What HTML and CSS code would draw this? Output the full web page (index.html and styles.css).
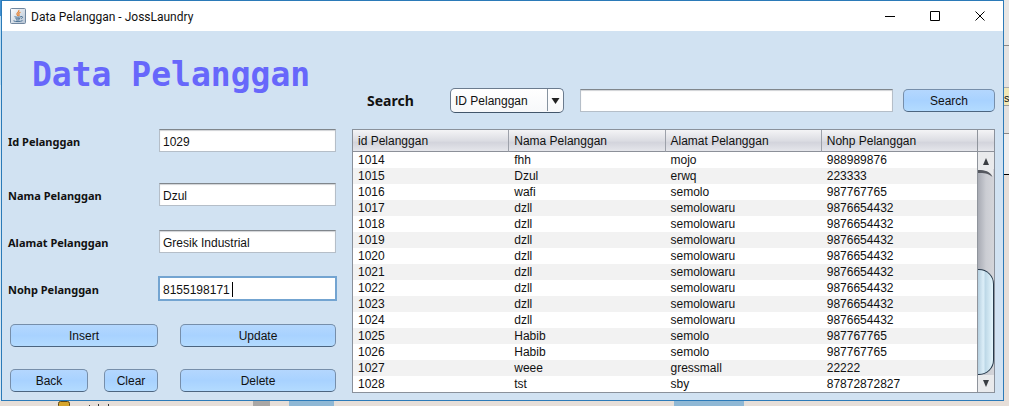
FILE: index.html
```html
<!DOCTYPE html>
<html lang="id">
<head>
<meta charset="utf-8">
<title>Data Pelanggan - JossLaundry</title>
<link rel="stylesheet" href="styles.css">
</head>
<body>
<div class="desktop">
  <div class="behind-left"></div>
  <div class="window">
    <header class="titlebar">
      <svg class="app-icon" width="16" height="16" viewBox="0 0 16 16" aria-hidden="true">
        <defs><linearGradient id="tile" x1="0" y1="0" x2="1" y2="1"><stop offset="0" stop-color="#fff"/><stop offset="1" stop-color="#b5c3d3"/></linearGradient></defs>
        <rect x=".5" y=".5" width="15" height="15" rx="1" fill="url(#tile)" stroke="#71879f"/>
        <path d="M8.800 2C10 4 6 4.600 7 6.500c.3.700 1 .9.800 1.700M10.500 4.300C8.400 5 8.400 5.800 9 6.500c.4.600.1 1.200-.5 1.500" fill="none" stroke="#e58132" stroke-width="1.200"/>
        <path d="M4.500 8.700c1.500.7 5 .6 6.500 0M5.500 10.400c1.300.5 3.400.5 4.700 0M6 11.800c1 .4 2.500.4 3.600 0M11 8.600c2.200-.5 2 1.400.2 2M3.500 12.800c2.200 1.200 7 1 9-.2" fill="none" stroke="#4c7396"/>
      </svg>
      <span class="window-title">Data Pelanggan - JossLaundry</span>
      <div class="window-controls">
        <button type="button" aria-label="Minimize"><svg width="11" height="11"><path d="M0 5.500h10" stroke="#000"/></svg></button>
        <button type="button" aria-label="Maximize"><svg width="11" height="11"><path d="M.5.500h9v9h-9z" fill="none" stroke="#000"/></svg></button>
        <button type="button" aria-label="Close"><svg width="11" height="11"><path d="M.5.500l9 9M9.500.500l-9 9" stroke="#000"/></svg></button>
      </div>
    </header>
    <main class="content">
      <section class="editor">
        <h1>Data Pelanggan</h1>
        <form class="form">
          <div class="field first"><label for="id">Id Pelanggan</label><input id="id" type="text" value="1029"></div>
          <div class="field"><label for="nama">Nama Pelanggan</label><input id="nama" type="text" value="Dzul"></div>
          <div class="field"><label for="alamat">Alamat Pelanggan</label><input id="alamat" type="text" value="Gresik Industrial"></div>
          <div class="field"><label for="nohp">Nohp Pelanggan</label><div class="active-box"><input id="nohp" type="text" value="8155198171"><i class="caret"></i></div></div>
          <div class="actions">
            <button class="btn wide" type="button">Insert</button>
            <button class="btn" type="button">Update</button>
            <button class="btn" type="button">Back</button>
            <button class="btn" type="button">Clear</button>
            <button class="btn" type="button">Delete</button>
          </div>
        </form>
      </section>
      <section class="browser">
        <form class="search">
          <label for="by">Search</label>
          <div class="combo"><select id="by"><option>ID Pelanggan</option></select><svg class="combo-arrow" width="16" height="22" aria-hidden="true"><path d="M.5 0v22" stroke="#8793a0"/><path d="M4.500 9h8l-4 6z" fill="#222"/></svg></div>
          <input type="text" aria-label="Search text">
          <button class="btn" type="button">Search</button>
        </form>
        <div class="grid">
          <table>
            <thead><tr><th>id Pelanggan</th><th>Nama Pelanggan</th><th>Alamat Pelanggan</th><th>Nohp Pelanggan</th></tr></thead>
            <tbody>
              <tr><td>1014</td><td>fhh</td><td>mojo</td><td>988989876</td></tr>
              <tr><td>1015</td><td>Dzul</td><td>erwq</td><td>223333</td></tr>
              <tr><td>1016</td><td>wafi</td><td>semolo</td><td>987767765</td></tr>
              <tr><td>1017</td><td>dzll</td><td>semolowaru</td><td>9876654432</td></tr>
              <tr><td>1018</td><td>dzll</td><td>semolowaru</td><td>9876654432</td></tr>
              <tr><td>1019</td><td>dzll</td><td>semolowaru</td><td>9876654432</td></tr>
              <tr><td>1020</td><td>dzll</td><td>semolowaru</td><td>9876654432</td></tr>
              <tr><td>1021</td><td>dzll</td><td>semolowaru</td><td>9876654432</td></tr>
              <tr><td>1022</td><td>dzll</td><td>semolowaru</td><td>9876654432</td></tr>
              <tr><td>1023</td><td>dzll</td><td>semolowaru</td><td>9876654432</td></tr>
              <tr><td>1024</td><td>dzll</td><td>semolowaru</td><td>9876654432</td></tr>
              <tr><td>1025</td><td>Habib</td><td>semolo</td><td>987767765</td></tr>
              <tr><td>1026</td><td>Habib</td><td>semolo</td><td>987767765</td></tr>
              <tr><td>1027</td><td>weee</td><td>gressmall</td><td>22222</td></tr>
              <tr><td>1028</td><td>tst</td><td>sby</td><td>87872872827</td></tr>
            </tbody>
          </table>
          <div class="scroll">
            <div class="corner"></div>
            <button class="arrow" type="button" aria-label="Scroll up"><svg width="8" height="8"><path d="M1 8l3-7 3 7z" fill="#3a3d42"/></svg></button>
            <div class="track">
              <svg class="track-cap" width="15" height="8" aria-hidden="true"><path d="M0 0h15v8C13 3 7 1 0 1z" fill="#e9eaec"/><path d="M0 1c7 0 12 1 14.500 7C10 4 6 4 0 4z" fill="#55585f"/></svg>
              <div class="thumb"></div>
            </div>
            <button class="arrow" type="button" aria-label="Scroll down"><svg width="8" height="8"><path d="M1 0h6L4 7z" fill="#3a3d42"/></svg></button>
          </div>
        </div>
      </section>
    </main>
  </div>
  <div class="behind-right"><span>s</span></div>
  <div class="behind-bottom">
    <svg class="folder" width="12" height="5" aria-hidden="true"><rect x=".5" y=".5" width="11" height="6" rx="2" fill="#d6a52c" stroke="#5d4512"/></svg>
    <svg class="letters" width="25" height="5" aria-hidden="true"><path d="M.5 4v1M9.500 3v2M19.500 3v2" stroke="#333"/></svg>
    <i class="gray-block"></i><i class="blue-block"></i><i class="blue-block later"></i>
  </div>
</div>
</body>
</html>
```
FILE: styles.css
```css
* { box-sizing: border-box; }
body { margin: 0; background: #e6ded8; font: 12px/16px "Liberation Sans", Arial, sans-serif; color: #111; }
button, input, select { font: inherit; color: inherit; }
.desktop { display: grid; grid-template-columns: 1px 1fr 5px; grid-template-rows: auto 5px; min-height: 100vh; overflow: hidden; }
.behind-left { background: linear-gradient(#3f8fd0 0 16px, #b9dcf3 16px 85px, #d5e6f2 85px); }
.window { display: flex; flex-direction: column; border: 1px solid #2b7ab8; background: #d1e2f2; }
.titlebar { display: flex; align-items: center; height: 30px; padding-left: 8px; background: #fff; font: 12px/16px Roboto, "Noto Sans", sans-serif; }
.window-title { flex: 1; padding: 1px 0 0 5px; }
.window-controls { display: flex; }
.window-controls button { display: grid; place-items: center; width: 45px; height: 30px; padding: 0; border: 0; background: none; }
.content { flex: 1; display: grid; grid-template-columns: 328px 1fr; gap: 16px; padding: 0 8px 7px 6px; }
h1 { height: 98px; margin: 0; padding: 22px 0 0 24px; color: #6767fb; font: bold 33px/44px "DejaVu Sans Mono", monospace; white-space: nowrap; }
.form { display: flex; flex-direction: column; gap: 24px; }
.field { display: grid; grid-template-columns: 151px 1fr; align-items: center; }
.first { margin-bottom: 7px; }
label { font: bold 11px/16px "Noto Sans", Tahoma, sans-serif; padding-top: 2px; }
input { width: 100%; min-width: 0; height: 23px; padding: 2px 3px 0; border: 1px solid #b5bec8; border-top-color: #80868c; border-radius: 0; background: #fff; box-shadow: inset 0 1px 1px #d0d2d5; outline: 0; }
.active-box { position: relative; }
.active-box input { display: block; border-color: #73a4d1; box-shadow: 0 0 0 1px #73a4d1; }
.caret { position: absolute; left: 73px; top: 5px; width: 1px; height: 15px; background: #000; }
.actions { display: grid; grid-template-columns: 78px 54px 1fr; column-gap: 16px; row-gap: 22px; padding-left: 2px; }
.actions .wide { grid-column: span 2; }
.actions .btn:nth-child(3n + 2) { margin-left: 6px; }
.actions .btn:nth-child(2) { margin-left: 6px; }
.btn { height: 23px; padding: 1px 0 0; border: 1px solid #768eaa; border-bottom-color: #4c6580; border-radius: 5px; background: linear-gradient(#b4d7fe, #a8d2ff 50%, #b3dbff); }
.search { display: flex; align-items: center; height: 98px; padding: 41px 0 0 15px; }
.search label { width: 83px; padding: 0; font-size: 14px; }
.combo { position: relative; width: 114px; height: 25px; }
.combo select { width: 100%; height: 100%; padding: 1px 20px 0 4px; appearance: none; border: 1px solid #6b7b8e; border-bottom-color: #43566b; border-radius: 5px; background: linear-gradient(#fff, #f7f8fa); }
.combo-arrow { position: absolute; right: 1px; top: 1px; pointer-events: none; }
.search > input { flex: 1; width: 0; margin: 0 10px 0 16px; }
.search .btn { width: 92px; }
.grid { display: grid; grid-template-columns: 1fr 16px; border: 1px solid #8a919b; background: #fff; }
table { width: 100%; table-layout: fixed; border-collapse: separate; border-spacing: 0; }
th, td { padding: 0 5px; text-align: left; white-space: nowrap; }
th { height: 22px; padding-top: 1px; font-weight: normal; line-height: 16px; }
th, .corner { background: linear-gradient(#f4f4f6, #dcdde3 50%, #d3d4dc 60%, #e5e6eb); border-right: 1px solid #9da1aa; border-bottom: 1px solid #8c9099; }
.corner { height: 22px; border-right: 0; }
td { height: 16px; padding-top: 1px; line-height: 15px; }
tbody tr:nth-child(even) { background: #f2f2f2; }
.scroll { display: flex; flex-direction: column; border-left: 1px solid #8f949c; margin-left: -1px; }
.arrow { display: grid; place-items: center; height: 17px; padding: 0; border: 0; background: #e9eaec; }
.track { flex: 1; display: flex; flex-direction: column; justify-content: space-between; background: linear-gradient(90deg, #a8abb4, #cbcdd3 50%, #d4d5da); }
.thumb { height: 106px; border: 1px solid #26394b; border-left: 0; border-radius: 0 15px 15px 0; background: linear-gradient(90deg, #b5cfdf, #dceef8 35%, #bed9e8 50%, #e4f5fc); }
.behind-right { padding-top: 90px; background: linear-gradient(#e8e6e4 0 45px, #888 45px 46px, #e4e2e1 46px 87px, #aaa 87px 88px, #f1e8b7 88px 105px, #999 105px 106px, #e3e1df 106px 133px, #888 133px 134px, #eee 134px 174px, #000 174px 175px, #e6ded8 175px); }
.behind-right span { display: block; font-size: 11px; line-height: 16px; }
.behind-bottom { grid-column: 1 / -1; display: flex; height: 5px; padding-left: 58px; background: #e6ded8; }
.letters { margin-left: 19px; }
.gray-block { width: 17px; margin-left: 139px; background: #aaa7a5; }
.blue-block { width: 45px; margin-left: 19px; background: #8fb8d5; }
.later { width: 70px; margin-left: 340px; }
```
